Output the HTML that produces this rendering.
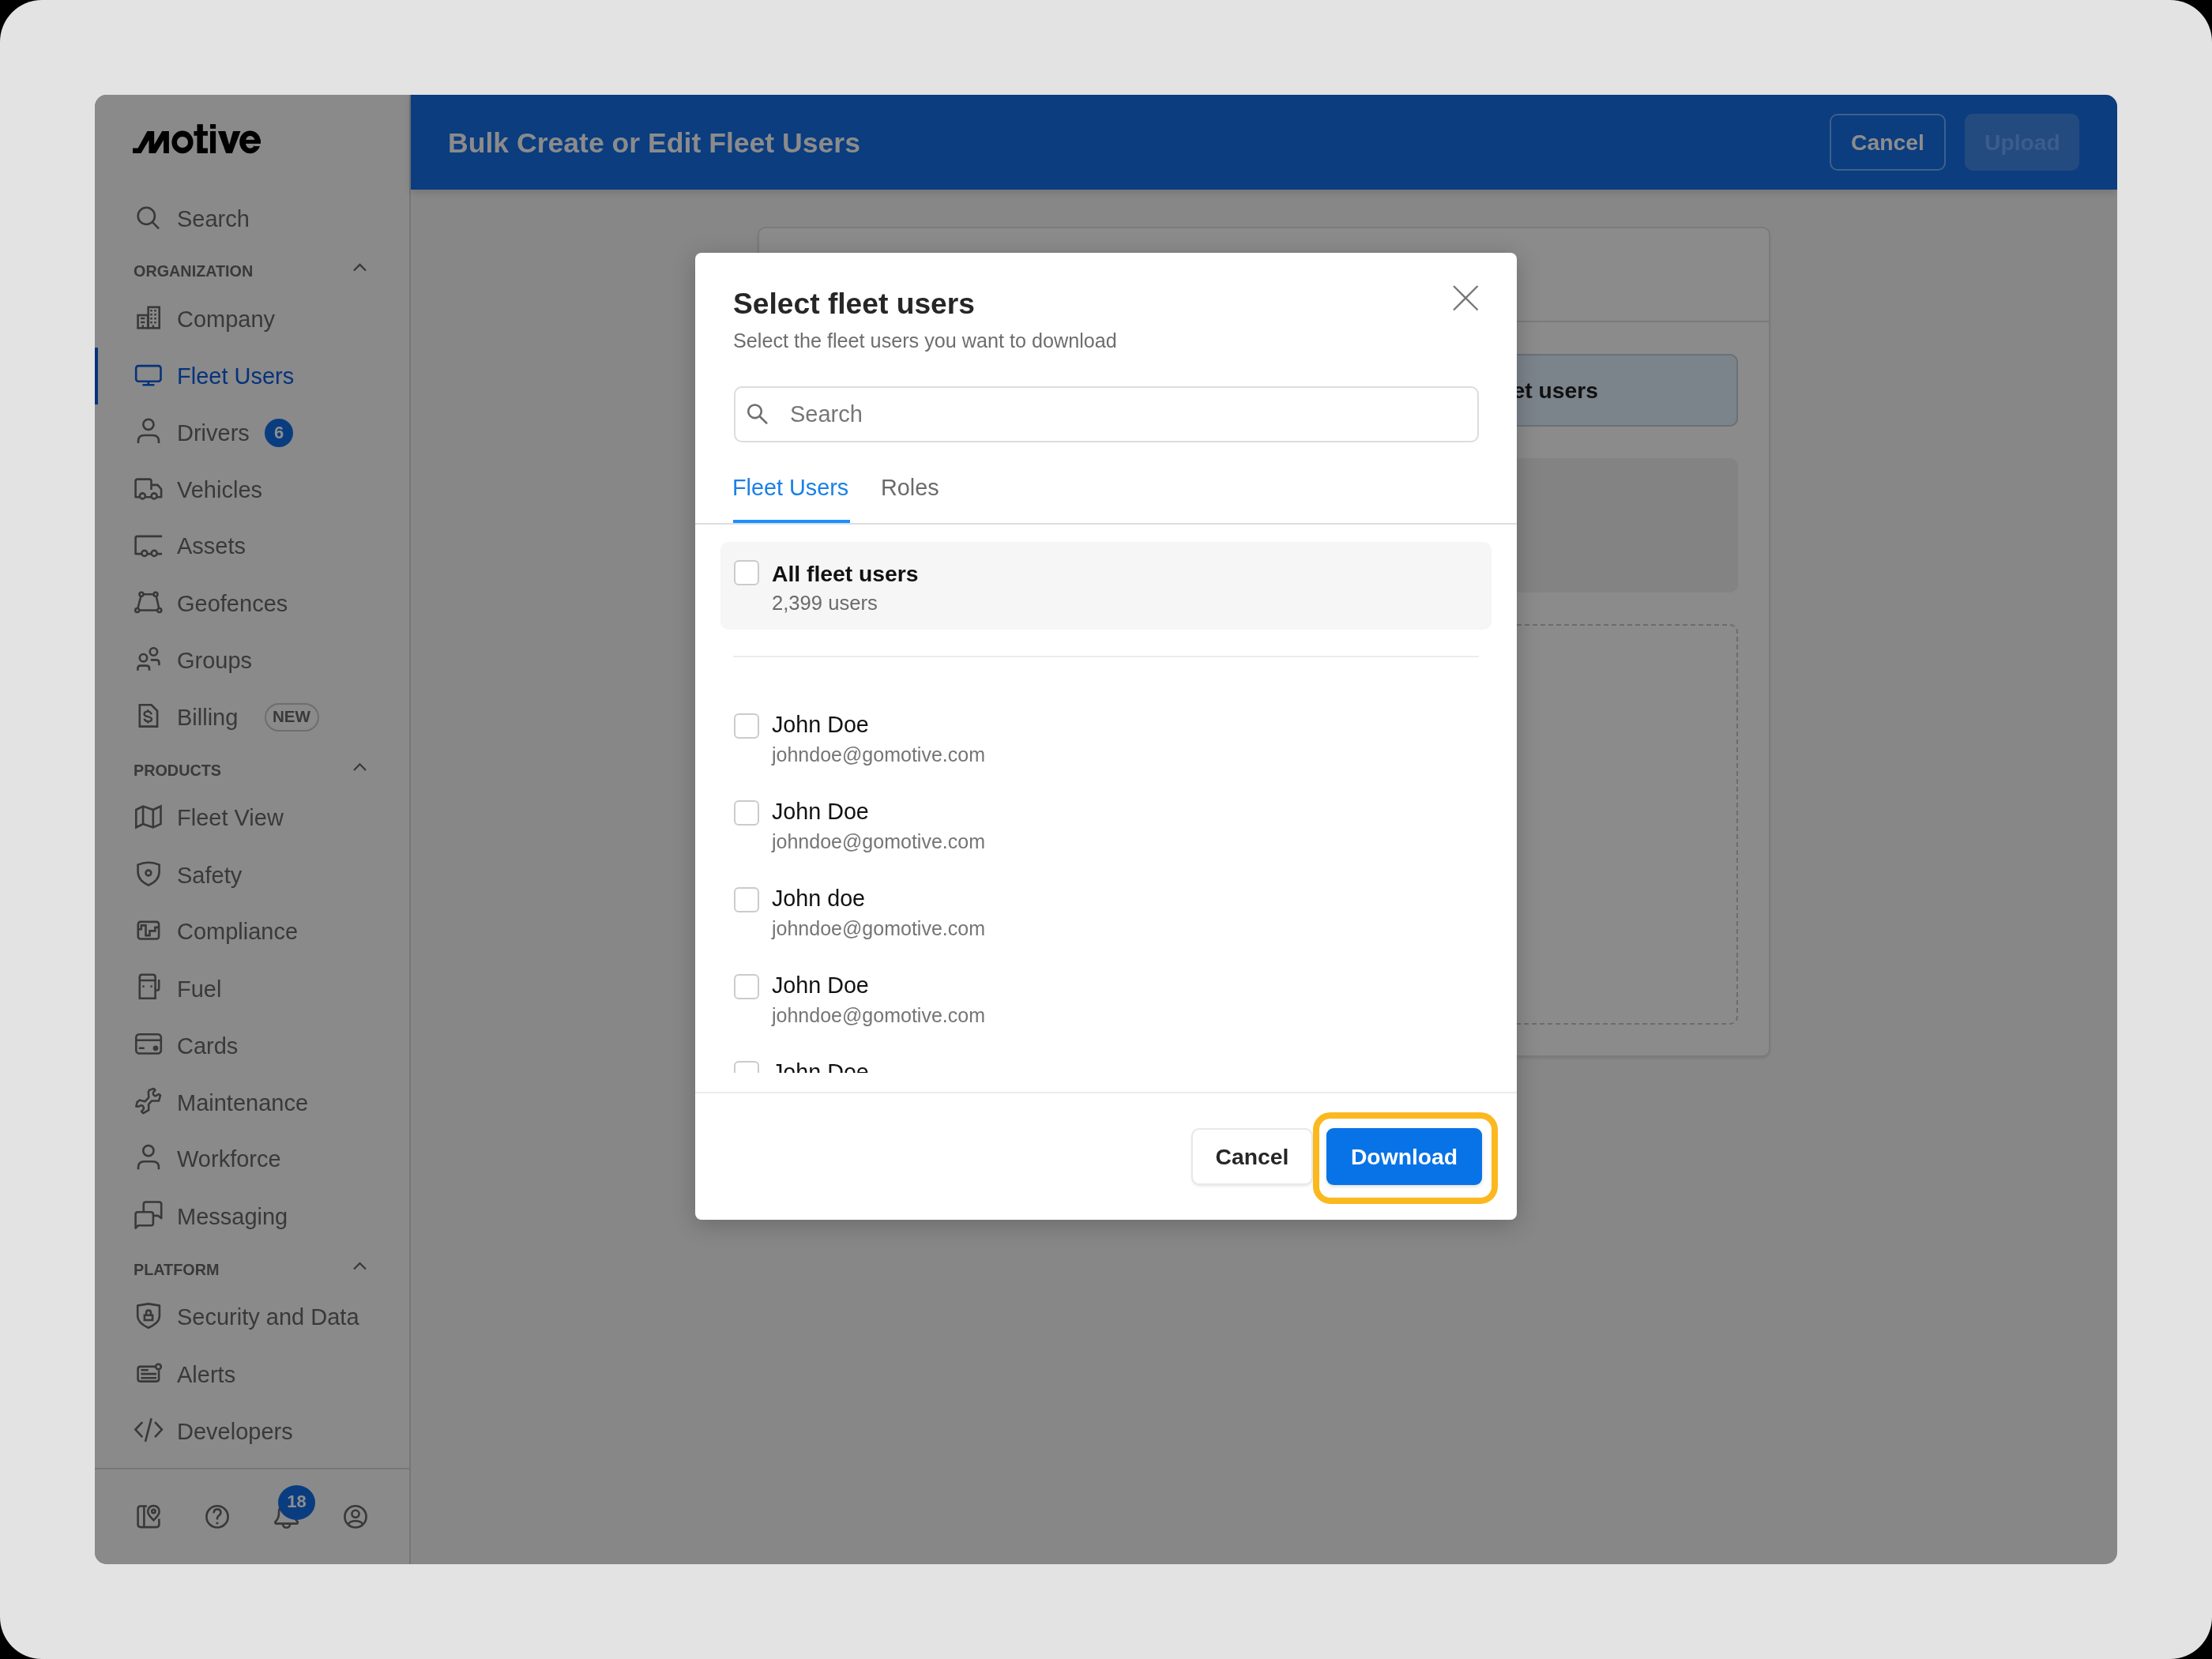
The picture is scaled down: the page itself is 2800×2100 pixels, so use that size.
<!DOCTYPE html>
<html><head><meta charset="utf-8"><title>Select fleet users</title>
<style>
html,body{margin:0;padding:0;width:2800px;height:2100px;overflow:hidden;background:#000}
.frame{position:absolute;left:0;top:0;width:2800px;height:2100px;background:#e3e3e3;border-radius:53px}
.app{position:absolute;left:0;top:0;width:2800px;height:2100px;clip-path:inset(120px 120px 120px 120px round 15px)}
.r{position:absolute}
.t{position:absolute;white-space:nowrap;line-height:1;font-family:"Liberation Sans", sans-serif;will-change:transform}
</style></head><body>
<div class="frame"></div>
<div class="app">
<div class="r" style="left:120px;top:120px;width:2560px;height:1860px;background:#878787"></div>
<div class="r" style="left:120px;top:120px;width:398px;height:1860px;background:#8a8a8a"></div>
<div class="r" style="left:518px;top:120px;width:2px;height:1860px;background:#767676"></div>
<div class="r" style="left:520px;top:120px;width:2160px;height:120px;background:#0b3d7f;box-shadow:0 3px 9px rgba(0,0,0,0.14)"></div>
<div class="t" style="left:567px;top:164.10px;font-size:35.6px;font-weight:bold;color:#8b8b8b;">Bulk Create or Edit Fleet Users</div>
<div class="r" style="left:2316px;top:144px;width:147px;height:72px;border:2px solid #3f5f8c;border-radius:10px;box-sizing:border-box"></div>
<div class="t" style="left:2343px;top:165.83px;font-size:28.3px;font-weight:bold;color:#8d8d8d;">Cancel</div>
<div class="r" style="left:2487px;top:144px;width:145px;height:72px;background:#244b80;border-radius:10px"></div>
<div class="t" style="left:2512px;top:165.83px;font-size:28.3px;font-weight:bold;color:#3c5d8c;">Upload</div>
<div class="r" style="left:959px;top:287px;width:1282px;height:1051px;background:#8b8b8b;border:2px solid #7b7b7b;border-radius:10px;box-sizing:border-box;box-shadow:0 2px 3px rgba(0,0,0,0.08)"></div>
<div class="r" style="left:961px;top:405.5px;width:1278px;height:2.0px;background:#7b7b7b"></div>
<div class="r" style="left:1000px;top:448px;width:1200px;height:92px;background:#7b838b;border:2px solid #6a7077;border-radius:10px;box-sizing:border-box"></div>
<div class="t" style="left:1700px;top:479.83px;font-size:28.3px;font-weight:bold;color:#111;width:323px;text-align:right;left:1700px">Download fleet users</div>
<div class="r" style="left:1000px;top:580px;width:1200px;height:170px;background:#838383;border-radius:10px"></div>
<div class="r" style="left:1000px;top:790px;width:1200px;height:507px;border:2px dashed #6c6c6c;border-radius:10px;box-sizing:border-box"></div>
<svg class="r" style="left:160px;top:150px" width="180" height="49.96" viewBox="0 0 2212 614"><path fill="#000" d="M98 462 L180 462 L325 197 L432 197 L432 410 L555 197 L662 197 L662 540 L578 540 L578 335 L455 540 L350 540 L350 335 L228 540 L98 540 Z"/><ellipse cx="872.5" cy="367.5" rx="167" ry="177" fill="#000"/><ellipse cx="872.5" cy="369" rx="87" ry="86" fill="#8a8a8a"/><path fill="#000" d="M1100 88 H1190 V197 H1265 V268 H1190 V462 H1265 V540 H1100 V268 H1050 V197 H1100 Z"/><rect x="1303" y="88" width="87" height="70" fill="#000"/><rect x="1303" y="197" width="87" height="343" fill="#000"/><path fill="#000" d="M1425 197 H1540 L1600 410 L1660 197 H1775 L1645 540 H1550 Z"/><ellipse cx="1924" cy="366" rx="164" ry="177" fill="#000"/><ellipse cx="1926" cy="367" rx="74" ry="98" fill="#8a8a8a"/><rect x="1830" y="331" width="258" height="61" fill="#000"/><rect x="1992" y="392" width="110" height="39" fill="#8a8a8a"/></svg>
<div class="t" style="left:224px;top:262.64px;font-size:29px;font-weight:normal;color:#393939;">Search</div>
<div class="t" style="left:224px;top:390.24px;font-size:29px;font-weight:normal;color:#393939;">Company</div>
<div class="t" style="left:224px;top:462.04px;font-size:29px;font-weight:normal;color:#05337b;">Fleet Users</div>
<div class="t" style="left:224px;top:534.14px;font-size:29px;font-weight:normal;color:#393939;">Drivers</div>
<div class="t" style="left:224px;top:605.74px;font-size:29px;font-weight:normal;color:#393939;">Vehicles</div>
<div class="t" style="left:224px;top:677.44px;font-size:29px;font-weight:normal;color:#393939;">Assets</div>
<div class="t" style="left:224px;top:750.24px;font-size:29px;font-weight:normal;color:#393939;">Geofences</div>
<div class="t" style="left:224px;top:821.84px;font-size:29px;font-weight:normal;color:#393939;">Groups</div>
<div class="t" style="left:224px;top:893.94px;font-size:29px;font-weight:normal;color:#393939;">Billing</div>
<div class="t" style="left:224px;top:1021.14px;font-size:29px;font-weight:normal;color:#393939;">Fleet View</div>
<div class="t" style="left:224px;top:1093.94px;font-size:29px;font-weight:normal;color:#393939;">Safety</div>
<div class="t" style="left:224px;top:1165.44px;font-size:29px;font-weight:normal;color:#393939;">Compliance</div>
<div class="t" style="left:224px;top:1237.64px;font-size:29px;font-weight:normal;color:#393939;">Fuel</div>
<div class="t" style="left:224px;top:1309.74px;font-size:29px;font-weight:normal;color:#393939;">Cards</div>
<div class="t" style="left:224px;top:1381.94px;font-size:29px;font-weight:normal;color:#393939;">Maintenance</div>
<div class="t" style="left:224px;top:1453.44px;font-size:29px;font-weight:normal;color:#393939;">Workforce</div>
<div class="t" style="left:224px;top:1525.64px;font-size:29px;font-weight:normal;color:#393939;">Messaging</div>
<div class="t" style="left:224px;top:1653.44px;font-size:29px;font-weight:normal;color:#393939;">Security and Data</div>
<div class="t" style="left:224px;top:1725.64px;font-size:29px;font-weight:normal;color:#393939;">Alerts</div>
<div class="t" style="left:224px;top:1797.74px;font-size:29px;font-weight:normal;color:#393939;">Developers</div>
<div class="t" style="left:168.5px;top:334.07px;font-size:19.8px;font-weight:bold;color:#393939;">ORGANIZATION</div>
<div class="t" style="left:168.5px;top:965.97px;font-size:19.8px;font-weight:bold;color:#393939;">PRODUCTS</div>
<div class="t" style="left:168.5px;top:1597.77px;font-size:19.8px;font-weight:bold;color:#393939;">PLATFORM</div>
<div class="r" style="left:120px;top:440px;width:4px;height:72px;background:#05337b"></div>
<div class="r" style="left:335px;top:530px;width:36px;height:36px;border-radius:50%;background:#0a3d80"></div>
<div class="t" style="left:335px;top:530px;width:36px;height:36px;line-height:36px;text-align:center;font-size:22px;font-weight:bold;color:#8e8e8e">6</div>
<div class="r" style="left:335px;top:890px;width:69px;height:36px;border:2px solid #6e6e6e;border-radius:18px;box-sizing:border-box"></div>
<div class="t" style="left:344.8px;top:896.50px;font-size:20.6px;font-weight:bold;color:#393939;">NEW</div>
<div class="r" style="left:120px;top:1858px;width:398px;height:2px;background:#777"></div>
<svg class="r" style="left:0;top:0" width="520" height="2100" viewBox="0 0 520 2100" fill="none" stroke="#393939" stroke-width="2.6"><circle cx="185.3" cy="273.4" r="10.6"/><path d="M193.2 281.3 L201 289.3"/><path stroke-width="2.2" d="M448 342.5 L455.5 334.90000000000003 L463 342.5"/><path stroke-width="2.2" d="M448 974.9000000000001 L455.5 967.3000000000001 L463 974.9000000000001"/><path stroke-width="2.2" d="M448 1606.6000000000001 L455.5 1599.0 L463 1606.6000000000001"/><rect x="174.6" y="399" width="12.6" height="16.3"/><rect x="187.7" y="388.8" width="14" height="26.5"/><g fill="#393939" stroke="none"><rect x="178" y="401.8" width="5.4" height="2.4"/><rect x="178" y="406.8" width="5.4" height="2.4"/><rect x="179.5" y="411.5" width="2.6" height="4"/><rect x="190.2" y="392" width="2.6" height="2.4"/><rect x="195.2" y="392" width="2.6" height="2.4"/><rect x="190.2" y="397" width="2.6" height="2.4"/><rect x="195.2" y="397" width="2.6" height="2.4"/><rect x="190.2" y="402" width="2.6" height="2.4"/><rect x="195.2" y="402" width="2.6" height="2.4"/><rect x="190.2" y="407" width="2.6" height="2.4"/><rect x="195.2" y="407" width="2.6" height="2.4"/><rect x="192.6" y="411.5" width="2.6" height="4"/></g><g stroke="#05337b"><rect x="172.2" y="463.1" width="31.3" height="19.6" rx="3"/><path d="M187.9 482.7 V487.3 M180.5 487.3 H195.4"/></g><circle cx="187.9" cy="537.3" r="6.6"/><path d="M175 561 V558.5 Q175 551 182.5 551 H193.5 Q201 551 201 558.5 V561"/><path stroke-linejoin="round" d="M176.6 629.2 H171.6 V609 Q171.6 606.6 174 606.6 H189.1 Q191.5 606.6 191.5 609 V619.9 M191.5 613.9 H199.5 L204.1 619.2 V629.2 H198.8 M184.2 629.2 H191.3"/><circle cx="180.4" cy="627.9" r="3.5"/><circle cx="195.1" cy="627.9" r="3.5"/><path stroke-linejoin="round" d="M205.1 678.9 H174 Q171.6 678.9 171.6 681.3 V701.1 H179.2 M186.6 701.1 H191.5 M198.9 701.1 H205.1"/><circle cx="182.9" cy="700.4" r="3.5"/><circle cx="195.2" cy="700.4" r="3.5"/><path d="M181.5 752.3 H194.5 M178.4 754.8 L174.4 770 M197.8 754.8 L201.2 770 M176.3 772.5 H199"/><circle cx="179" cy="752.3" r="2.5"/><circle cx="197" cy="752.3" r="2.5"/><circle cx="173.7" cy="772.5" r="2.5"/><circle cx="201.8" cy="772.5" r="2.5"/><circle cx="181.5" cy="832.7" r="4.7"/><path d="M174.4 848.8 V846 Q174.4 842.6 177.8 842.6 H185.4 Q189 842.6 189 846 V848.8"/><circle cx="194.4" cy="825" r="4.7"/><path d="M190.8 835.4 H197.8 Q201.4 835.4 201.4 839 V842.2"/><path d="M176.8 892.3 H191.6 L199.1 899.8 V919.6 H176.8 Z"/><path stroke-width="2.4" d="M191.8 904.4 Q190.8 900.6 187.2 900.6 Q182.6 900.6 182.6 903.9 Q182.6 906.1 187.2 907.1 Q192 908.2 192 910.4 Q192 913.1 187.2 913.1 Q183.4 913.1 182.6 909.8 M187.2 898.3 V900.6 M187.2 913.1 V915.5"/><path d="M172.3 1025 L181.1 1020.6 L193.8 1025 L203.5 1020.6 V1043 L193.8 1047.4 L181.1 1043 L172.3 1047.4 Z M181.1 1020.6 V1043 M193.8 1025 V1047.4"/><path d="M174.6 1094.6 Q188 1088.8 201.6 1094.6 V1103.5 Q201.6 1114.5 188 1120.6 Q174.6 1114.5 174.6 1103.5 Z"/><circle cx="187.9" cy="1105" r="3.4"/><rect x="174.8" y="1166.9" width="26.3" height="21.6" rx="3"/><path d="M174.8 1176.3 H178.8 V1171.4 H184.5 V1184.1 H189.5 V1178.4 H196.4 V1173.9 H201.1"/><path d="M176.8 1263.7 V1236.8 Q176.8 1233.8 179.8 1233.8 H193.6 Q196.6 1233.8 196.6 1236.8 V1263.7 Z M176.8 1241 H196.6 M196.6 1253.5 H198.6 Q201.2 1253.5 201.2 1250.9 V1240"/><g fill="#393939" stroke="none"><rect x="180.3" y="1247.4" width="2.4" height="2.4"/><rect x="190.4" y="1247.4" width="2.4" height="2.4"/></g><rect x="172.3" y="1309.3" width="31.5" height="24.2" rx="4"/><path d="M172.3 1316.7 H203.8 M175.8 1326.8 H182.8"/><circle cx="197" cy="1326.8" r="3.4" fill="#393939" stroke="none"/><path stroke-width="2.5" stroke-linejoin="round" d="M188.9 1379.9 L194.6 1378 L196.5 1379.9 L193.9 1382.8 Q193.6 1385.4 194.8 1386.3 Q195.8 1387.4 196.9 1387.3 L200.8 1385 L203 1386.4 L201.1 1393.4 L192.1 1393.4 L188.1 1397.8 L188.3 1405.1 L181.3 1409.2 L179.1 1407 L182.1 1403.2 Q181.6 1400.6 180.6 1399.8 Q179.4 1399 178.4 1399.3 L175.3 1400.7 L172.3 1400.5 L173.7 1395.1 L176.9 1392.6 L183.7 1394.2 L188.3 1389.4 L187.8 1382.3 Z"/><circle cx="187.9" cy="1456.6" r="6.6"/><path d="M175 1480.3 V1477.8 Q175 1470.3 182.5 1470.3 H193.5 Q201 1470.3 201 1477.8 V1480.3"/><path stroke-linejoin="round" d="M181.8 1534.3 V1524.3 Q181.8 1521.5 184.6 1521.5 H201.4 Q204.2 1521.5 204.2 1524.3 V1542.1 L200.3 1538.9 H193.9"/><path stroke-linejoin="round" d="M171.6 1554.6 V1537.1 Q171.6 1534.3 174.4 1534.3 H191.1 Q193.9 1534.3 193.9 1537.1 V1548.5 Q193.9 1551.3 191.1 1551.3 H174.8 Z"/><path stroke-linejoin="round" d="M174.2 1652.6 L187.8 1650.4 L201.9 1652.6 V1666 Q201.9 1674.5 187.8 1680.8 Q174.2 1674.5 174.2 1666 Z"/><rect x="182.9" y="1664.8" width="10.2" height="6.2"/><path d="M185.1 1664.8 V1661.6 Q185.1 1658.6 188 1658.6 Q190.9 1658.6 190.9 1661.6 V1664.8"/><path d="M196.5 1729.9 H177.6 Q174.6 1729.9 174.6 1732.9 V1745.6 Q174.6 1748.6 177.6 1748.6 H198.1 Q201.1 1748.6 201.1 1745.6 V1734.5"/><path d="M178.4 1734.3 H187.8 M178.4 1739.1 H198 M178.4 1744.2 H198"/><circle cx="200.5" cy="1730.1" r="3.3"/><path d="M180.3 1800.1 L171.4 1809.6 L180.3 1819.1 M196.1 1800.1 L204.9 1809.6 L196.1 1819.1 M191.6 1795.4 L184 1824.8"/><path d="M186 1906.5 H178 Q174.6 1906.5 174.6 1910 V1929.6 Q174.6 1933.1 178 1933.1 H198 Q201.4 1933.1 201.4 1929.6 V1922.5 M182.4 1906.5 V1933.1"/><path d="M194.4 1924.3 L189.2 1918.6 Q186.8 1915.8 187.2 1912.6 Q188 1906.2 194.4 1906 Q200.8 1906.2 201.6 1912.6 Q202 1915.8 199.6 1918.6 Z"/><circle cx="194.4" cy="1913" r="2.2"/><circle cx="275" cy="1919.9" r="13.6"/><path d="M270.6 1915.2 Q270.8 1910.4 275 1910.4 Q279.4 1910.4 279.4 1914.6 Q279.4 1917.4 276.6 1918.8 Q275 1919.7 275 1922.2 V1923.4"/><circle cx="275" cy="1928" r="1.6" fill="#393939" stroke="none"/><path stroke-linejoin="round" d="M350.2 1928.6 H375 Q377.6 1928.6 376.6 1926.2 Q372.2 1922 372.2 1915.5 V1913.8 Q372.2 1905.6 362.6 1905 Q353 1905.6 353 1913.8 V1915.5 Q353 1922 348.6 1926.2 Q347.6 1928.6 350.2 1928.6 Z M358 1929.8 Q358.8 1933.8 362.6 1933.8 Q366.4 1933.8 367.2 1929.8"/><circle cx="450" cy="1919.9" r="13.6"/><circle cx="450" cy="1916.3" r="4.6"/><path d="M440.2 1929.8 Q443 1925.2 450 1925.2 Q457 1925.2 459.8 1929.8"/></svg>
<div class="r" style="left:352px;top:1880px;width:47px;height:44px;border-radius:50%;background:#0a3d80"></div>
<div class="t" style="left:352px;top:1879px;width:47px;height:44px;line-height:44px;text-align:center;font-size:22px;font-weight:bold;color:#8e8e8e">18</div>
<div class="r" style="left:880px;top:320px;width:1040px;height:1224px;background:#fff;border-radius:8px;box-shadow:0 6px 30px rgba(0,0,0,0.22)"></div>
<div class="t" style="left:928px;top:365.75px;font-size:37.2px;font-weight:bold;color:#262626;">Select fleet users</div>
<div class="t" style="left:928px;top:419.03px;font-size:25.2px;font-weight:normal;color:#6e6e6e;">Select the fleet users you want to download</div>
<svg class="r" style="left:1835px;top:357px" width="40" height="40" viewBox="0 0 40 40" stroke="#777" stroke-width="2.3" fill="none"><path d="M5 5 L35.5 35.5 M35.5 5 L5 35.5"/></svg>
<div class="r" style="left:928.5px;top:488.5px;width:943.0px;height:71.0px;border:2px solid #dcdcdc;border-radius:10px;box-sizing:border-box"></div>
<svg class="r" style="left:940px;top:505px" width="40" height="40" viewBox="0 0 40 40" stroke="#6e6e6e" stroke-width="2.6" fill="none"><circle cx="15.5" cy="15.8" r="8.3"/><path d="M21.6 22 L31 31.2"/></svg>
<div class="t" style="left:1000px;top:509.64px;font-size:29px;font-weight:normal;color:#767676;">Search</div>
<div class="t" style="left:927px;top:602.81px;font-size:28.8px;font-weight:normal;color:#1a80e6;">Fleet Users</div>
<div class="t" style="left:1115px;top:602.81px;font-size:28.8px;font-weight:normal;color:#6b6b6b;">Roles</div>
<div class="r" style="left:928px;top:658px;width:148px;height:4px;background:#1890ff"></div>
<div class="r" style="left:880px;top:662px;width:1040px;height:2px;background:#dedede"></div>
<div class="r" style="left:912px;top:686px;width:976px;height:111px;background:#f6f6f6;border-radius:10px"></div>
<div class="r" style="left:928.5px;top:709px;width:32.0px;height:32px;background:#fff;border:2px solid #cbcbcb;border-radius:6px;box-sizing:border-box"></div>
<div class="t" style="left:977px;top:711.83px;font-size:28.3px;font-weight:bold;color:#111;">All fleet users</div>
<div class="t" style="left:977px;top:750.50px;font-size:25.6px;font-weight:normal;color:#6b6b6b;">2,399 users</div>
<div class="r" style="left:928px;top:830px;width:944px;height:2px;background:#ececec"></div>
<div class="r" style="left:880px;top:840px;width:1040px;height:518px;overflow:hidden">
<div class="r" style="left:48.5px;top:63.299999999999955px;width:32.0px;height:32.0px;background:#fff;border:2px solid #cbcbcb;border-radius:6px;box-sizing:border-box"></div>
<div class="t" style="left:97px;top:63.19px;font-size:28.7px;color:#111">John Doe</div>
<div class="t" style="left:97px;top:103.40px;font-size:25px;color:#757575">johndoe@gomotive.com</div>
<div class="r" style="left:48.5px;top:173.29999999999995px;width:32.0px;height:32.0px;background:#fff;border:2px solid #cbcbcb;border-radius:6px;box-sizing:border-box"></div>
<div class="t" style="left:97px;top:173.19px;font-size:28.7px;color:#111">John Doe</div>
<div class="t" style="left:97px;top:213.40px;font-size:25px;color:#757575">johndoe@gomotive.com</div>
<div class="r" style="left:48.5px;top:283.29999999999995px;width:32.0px;height:32.0px;background:#fff;border:2px solid #cbcbcb;border-radius:6px;box-sizing:border-box"></div>
<div class="t" style="left:97px;top:283.19px;font-size:28.7px;color:#111">John doe</div>
<div class="t" style="left:97px;top:323.40px;font-size:25px;color:#757575">johndoe@gomotive.com</div>
<div class="r" style="left:48.5px;top:393.29999999999995px;width:32.0px;height:32.0px;background:#fff;border:2px solid #cbcbcb;border-radius:6px;box-sizing:border-box"></div>
<div class="t" style="left:97px;top:393.19px;font-size:28.7px;color:#111">John Doe</div>
<div class="t" style="left:97px;top:433.40px;font-size:25px;color:#757575">johndoe@gomotive.com</div>
<div class="r" style="left:48.5px;top:503.29999999999995px;width:32.0px;height:32.0px;background:#fff;border:2px solid #cbcbcb;border-radius:6px;box-sizing:border-box"></div>
<div class="t" style="left:97px;top:503.19px;font-size:28.7px;color:#111">John Doe</div>
<div class="t" style="left:97px;top:543.40px;font-size:25px;color:#757575">johndoe@gomotive.com</div>
</div>
<div class="r" style="left:880px;top:1382px;width:1040px;height:2px;background:#ececec"></div>
<div class="r" style="left:1508px;top:1427.5px;width:154px;height:72.5px;background:#fff;border:2px solid #e8e8e8;border-radius:10px;box-sizing:border-box;box-shadow:0 2px 3px rgba(0,0,0,0.08)"></div>
<div class="t" style="left:1508px;top:1427.5px;width:154px;height:72.5px;line-height:72.5px;text-align:center;font-size:28.3px;font-weight:bold;color:#262626">Cancel</div>
<div class="r" style="left:1679px;top:1428px;width:197px;height:72px;background:#0873e6;border-radius:9px;box-shadow:0 2px 4px rgba(0,0,0,0.15)"></div>
<div class="t" style="left:1679px;top:1428px;width:197px;height:72px;line-height:72px;text-align:center;font-size:28.3px;font-weight:bold;color:#fff">Download</div>
<div class="r" style="left:1662px;top:1408px;width:234px;height:116px;border:8px solid #fbb81f;border-radius:22px;box-sizing:border-box"></div>
</div>
</body></html>
